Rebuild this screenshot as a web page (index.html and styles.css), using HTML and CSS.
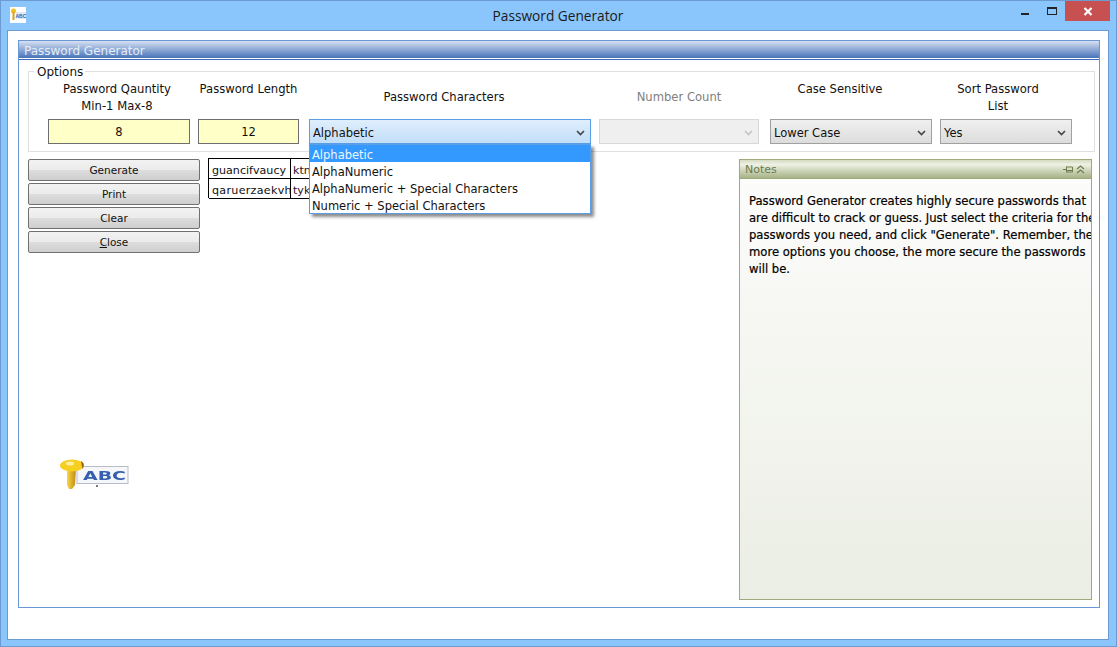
FILE: index.html
```html
<!DOCTYPE html>
<html lang="en">
<head>
<meta charset="utf-8">
<title>Password Generator</title>
<link rel="stylesheet" href="styles.css">
</head>
<body>
<div class="window">
  <header class="titlebar">
    <svg class="app-icon" width="16" height="16" viewBox="0 0 16 16"><rect width="16" height="16" fill="#fff"/><rect x="6" y="5" width="10" height="7" fill="#e4e8f0"/><text x="5.500" y="11" class="app-icon-text">ABC</text><circle cx="3.500" cy="4" r="2.500" fill="#f0c020"/><rect x="2.500" y="5" width="2" height="8" fill="#d8a020"/></svg>
    <div class="title">Password Generator</div>
    <div class="controls">
      <span class="ctl"><svg width="10" height="10" viewBox="0 0 10 10"><rect x="0" y="7" width="8" height="2" fill="#222"/></svg></span>
      <span class="ctl"><svg width="11" height="10" viewBox="0 0 11 10"><rect x=".5" y="1.500" width="9" height="7" fill="none" stroke="#222"/><rect x="0" y="1" width="10" height="2" fill="#222"/></svg></span>
      <span class="ctl-close"><svg width="10" height="9" viewBox="0 0 10 9"><path d="M1.500 1 8.500 8M8.500 1 1.500 8" stroke="#fff" stroke-width="2.200"/></svg></span>
    </div>
  </header>
  <main class="client">
    <section class="panel">
      <div class="panel-head">Password Generator</div>
      <div class="panel-body">
        <fieldset class="options">
          <legend>Options</legend>
          <div class="col col-qty">
            <div class="lbl lbl-qty">Password Qauntity<br>Min-1 Max-8</div>
            <div class="input">8</div>
          </div>
          <div class="col col-len">
            <div class="lbl">Password Length</div>
            <div class="input">12</div>
          </div>
          <div class="col col-chars">
            <div class="lbl lbl-mid lbl-chars">Password Characters</div>
            <div class="select select-open">Alphabetic<svg class="chev" width="9" height="6" viewBox="0 0 9 6"><path d="M1 1 4.500 4.500 8 1" fill="none" stroke="#444" stroke-width="1.600"/></svg></div>
            <ul class="dropdown">
              <li class="sel">Alphabetic</li>
              <li>AlphaNumeric</li>
              <li>AlphaNumeric + Special Characters</li>
              <li>Numeric + Special Characters</li>
            </ul>
          </div>
          <div class="col col-num">
            <div class="lbl lbl-mid lbl-off">Number Count</div>
            <div class="select select-off"><svg class="chev" width="9" height="6" viewBox="0 0 9 6"><path d="M1 1 4.500 4.500 8 1" fill="none" stroke="#c4c4c4" stroke-width="1.600"/></svg></div>
          </div>
          <div class="col col-case">
            <div class="lbl lbl-case">Case Sensitive</div>
            <div class="select">Lower Case<svg class="chev" width="9" height="6" viewBox="0 0 9 6"><path d="M1 1 4.500 4.500 8 1" fill="none" stroke="#444" stroke-width="1.600"/></svg></div>
          </div>
          <div class="col col-sort">
            <div class="lbl lbl-sort">Sort Password<br>List</div>
            <div class="select">Yes<svg class="chev" width="9" height="6" viewBox="0 0 9 6"><path d="M1 1 4.500 4.500 8 1" fill="none" stroke="#444" stroke-width="1.600"/></svg></div>
          </div>
        </fieldset>
        <div class="lower">
          <div class="left">
            <div class="work">
              <div class="buttons">
                <button class="btn">Generate</button>
                <button class="btn">Print</button>
                <button class="btn">Clear</button>
                <button class="btn"><u>C</u>lose</button>
              </div>
              <div class="grid">
                <div class="cell">guancifvaucy</div>
                <div class="cell cell-b">ktn</div>
                <div class="cell cell-long">qaruerzaekvh</div>
                <div class="cell cell-b">tyk</div>
              </div>
            </div>
            <svg class="logo" width="72" height="32" viewBox="0 0 72 32">
              <defs>
                <linearGradient id="k" x1="0" y1="0" x2="1" y2="0"><stop offset="0" stop-color="#f8d840"/><stop offset="1" stop-color="#c08a18"/></linearGradient>
              </defs>
              <rect x="18" y="7.500" width="51" height="17" fill="#f6f7fb" stroke="#b8bcc6"/>
              <text x="24" y="21" class="logo-text" textLength="43" lengthAdjust="spacingAndGlyphs">ABC</text>
              <rect x="37" y="26" width="2" height="2" fill="#777"/>
              <path d="M8 10h9l-1 16-3 4h-3l-2-4z" fill="url(#k)"/>
              <ellipse cx="13" cy="6.500" rx="12" ry="6" fill="#f6cf20"/>
              <ellipse cx="11" cy="4.500" rx="4" ry="2" fill="#fdf0a0"/>
              <path d="M22 2c3 1.500 3.500 4.500 1.500 8z" fill="#9a5a10"/>
            </svg>
          </div>
          <aside class="notes">
            <div class="notes-head">
              <span>Notes</span>
              <span class="notes-icons">
                <svg width="10" height="9" viewBox="0 0 10 9"><path d="M0 4.500h3M3.500 1.500v6M3.500 2h6v5h-6M3.500 5.500h6" fill="none" stroke="#6f7f4c"/></svg>
                <svg width="9" height="9" viewBox="0 0 9 9"><path d="M1 4 4.500 1 8 4M1 8 4.500 5 8 8" fill="none" stroke="#6f7f4c" stroke-width="1.300"/></svg>
              </span>
            </div>
            <div class="notes-body">Password Generator creates highly secure passwords that<br>are difficult to crack or guess. Just select the criteria for the<br>passwords you need, and click "Generate". Remember, the<br>more options you choose, the more secure the passwords<br>will be.</div>
          </aside>
        </div>
      </div>
    </section>
  </main>
</div>
</body>
</html>
```
FILE: styles.css
```css
* { box-sizing: border-box; }
html, body { margin: 0; height: 100%; }
body { font: 11.500px "DejaVu Sans", sans-serif; color: #111; overflow: hidden; }
.window { width: 1117px; height: 647px; background: #8ac5fb; border: 1px solid #6b9bd0; display: flex; flex-direction: column; padding: 0 7px 6px 6px; }
.titlebar { height: 29px; flex: none; display: flex; align-items: flex-start; position: relative; }
.app-icon { margin: 6px 0 0 3px; }
.app-icon-text { font: bold 5px "Liberation Sans", sans-serif; fill: #3a62b0; }
.title { position: absolute; left: 0; right: 0; top: 5px; text-align: center; font: 13.700px "Open Sans", sans-serif; color: #1a1a1a; }
.controls { margin-left: auto; display: flex; position: relative; margin-right: -1px; }
.ctl { width: 26px; height: 20px; display: flex; align-items: center; justify-content: center; }
.ctl-close { width: 45px; height: 20px; background: #c75050; display: flex; align-items: center; justify-content: center; }
.client { flex: 1; background: #fff; border: 1px solid #6b9bd0; padding: 9px 8px 31px 10px; display: flex; }
.panel { flex: 1; border: 1px solid #6b97d4; display: flex; flex-direction: column; }
.panel-head { height: 19px; flex: none; border-bottom: 1px solid #3d6bb8; box-shadow: inset 0 -1px 0 #fff; padding: 3px 5px 0; background: linear-gradient(#d6e0f2, #3f6db6); color: #e6edf8; line-height: 15px; font-size: 12px; }
.panel-body { flex: 1; padding: 11px 4px 7px 9px; display: flex; flex-direction: column; }
.options { margin: 0; padding: 0 0 7px 19px; height: 81px; border: 1px solid #e0e0e0; display: flex; flex: none; position: relative; }
.options legend { padding: 0 2px 0 3px; margin-left: 5px; line-height: 9px; height: 9px; font-size: 12px; position: absolute; top: -4px; left: 0; background: #fff; }
.col { display: flex; flex-direction: column; position: relative; }
.col-qty { width: 142px; }
.col-len { width: 101px; margin-left: 8px; }
.col-chars { width: 282px; margin-left: 10px; }
.col-num { width: 160px; margin-left: 8px; }
.col-case { width: 162px; margin-left: 11px; }
.col-sort { width: 132px; margin-left: 8px; }
.lbl { height: 47px; padding-top: 9px; line-height: 17px; text-align: center; flex: none; font-size: 11.600px; }
.lbl-mid { padding-top: 17px; }
.lbl-off { color: #808080; }
.lbl-qty { padding-right: 4px; }
.lbl-chars { padding-right: 12px; }
.lbl-case { padding-right: 22px; }
.lbl-sort { padding-right: 16px; }
.input { height: 25px; background: #ffffc8; border: 1px solid #6e6e6e; text-align: center; line-height: 25px; }
.select { height: 25px; border: 1px solid #a0a0a0; background: linear-gradient(#f0f0f0, #dcdcdc); padding: 2px 5px 0 3px; display: flex; align-items: center; justify-content: space-between; }
.select-open { background: linear-gradient(#dfeefc, #c2def9); border-color: #5a9ee6; }
.select-off { background: #efefef; border-color: #d8d8d8; justify-content: flex-end; }
.chev { flex: none; }
.dropdown { position: absolute; left: 0; top: 72px; width: 282px; height: 70px; margin: 0; padding: 0; list-style: none; background: #fff; border: 1px solid #5a9ee6; box-shadow: 3px 3px 3px rgba(0,0,0,.45); z-index: 2; }
.dropdown li { height: 17px; line-height: 21px; padding-left: 2px; }
.dropdown .sel { background: #3399ff; color: #eef6ff; line-height: 19px; padding-top: 1px; }
.lower { flex: 1; display: flex; padding-top: 7px; justify-content: space-between; padding-right: 3px; }
.left { display: flex; flex-direction: column; align-items: flex-start; }
.work { display: flex; }
.buttons { display: flex; flex-direction: column; gap: 2px; width: 172px; }
.btn { height: 22px; padding: 0; border: 1px solid #707070; border-radius: 2px; background: linear-gradient(#f2f2f2 0, #ebebeb 50%, #dddddd 50%, #cfcfcf 100%); font: inherit; font-size: 10.500px; color: #111; }
.grid { display: grid; grid-template-columns: 82px 60px; margin: -1px 0 0 8px; border-top: 1px solid #000; border-left: 1px solid #000; height: 40px; align-self: flex-start; font-size: 11.100px; }
.cell { height: 20px; border-right: 1px solid #000; border-bottom: 1px solid #000; padding: 2px 0 0 3px; line-height: 19px; overflow: hidden; white-space: nowrap; }
.cell-long { letter-spacing: .3px; }
.cell-b { color: #301028; padding-left: 2px; }
.logo { margin: 206px 0 0 31px; filter: blur(.4px); }
.logo-text { font: bold 13px "DejaVu Sans", sans-serif; fill: #3560b0; }
.notes { width: 353px; display: flex; flex-direction: column; border: 1px solid #a0a97c; }
.notes-head { height: 19px; flex: none; display: flex; justify-content: space-between; align-items: center; padding: 1px 6px 0 5px; background: linear-gradient(#d4dcc0, #eef1e4 25%, #a6b286); border-bottom: 1px solid #a0a97c; color: #6c7a4c; font-size: 11px; }
.notes-icons { display: flex; gap: 3px; align-items: center; }
.notes-body { flex: 1; background: linear-gradient(#fcfcfb, #ebeee4); padding: 14px 0 0 9px; line-height: 17px; font-size: 11.620px; white-space: nowrap; overflow: hidden; color: #000; -webkit-text-stroke: .2px #000; }
```
